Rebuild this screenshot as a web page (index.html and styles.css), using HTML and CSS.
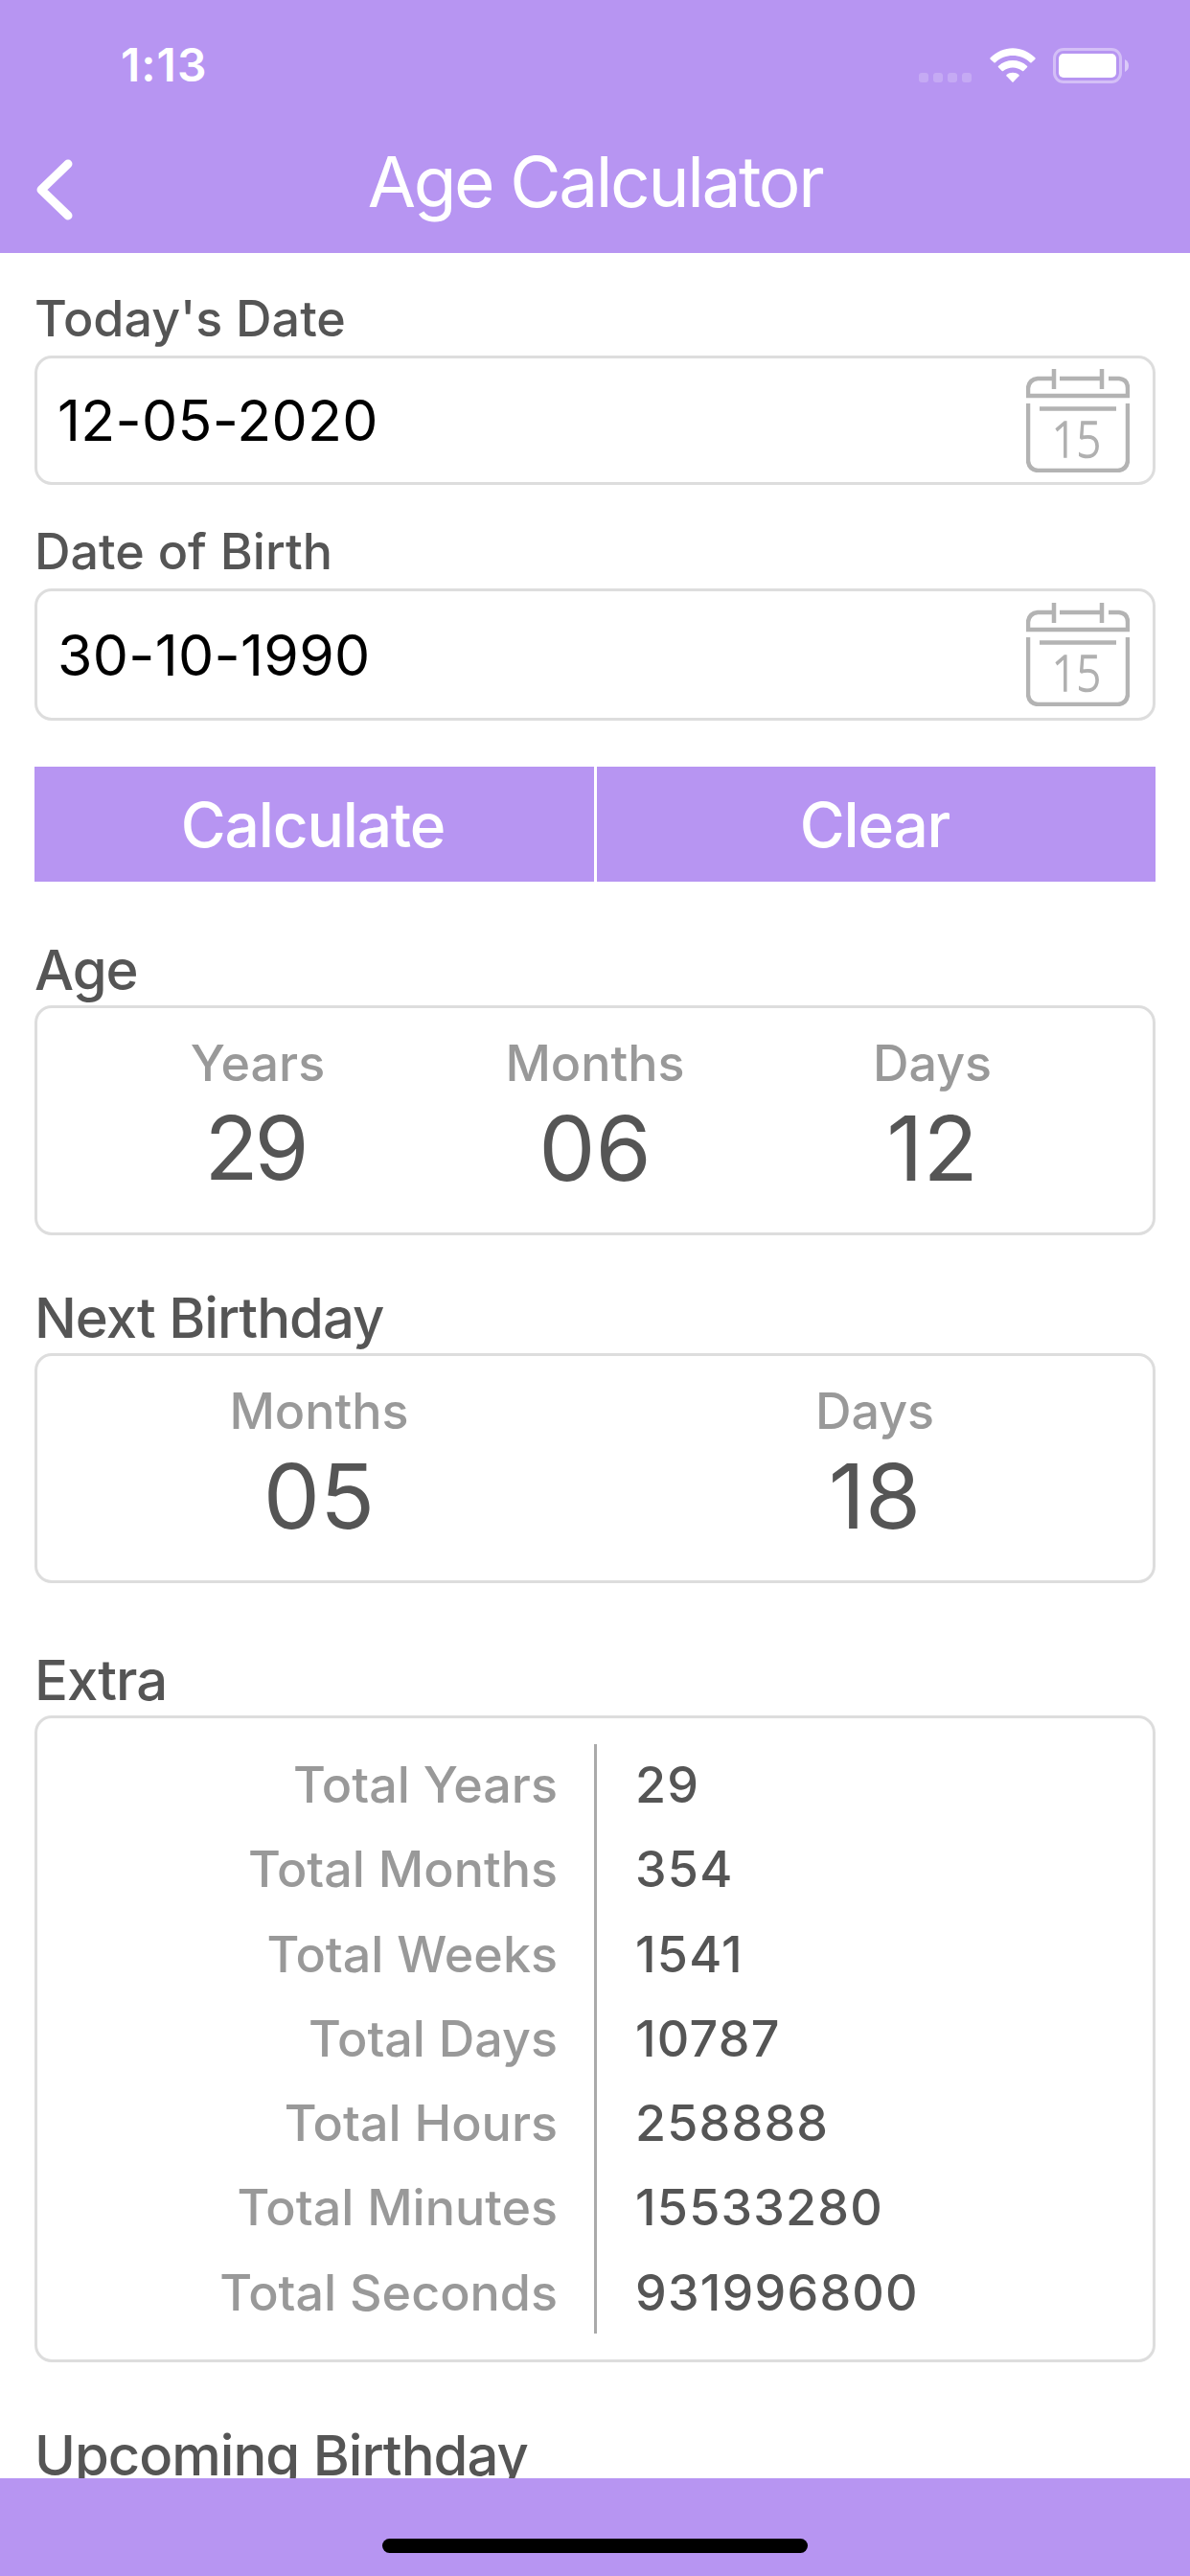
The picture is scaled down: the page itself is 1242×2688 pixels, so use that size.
FILE: index.html
```html
<!DOCTYPE html>
<html lang="en">
<head>
    <meta charset="UTF-8">
    <meta name="viewport" content="width=device-width, initial-scale=1.0">
    <title>Age Calculator</title>
    <link rel="stylesheet" href="styles.css">
</head>
<body>

    <!-- Header -->
    <header class="header">
        <div class="status-bar">
            <span class="time">1:13</span>
            <div class="status-icons">
                <svg class="signal" viewBox="0 0 55 10">
                    <rect x="0" width="10" height="10" rx="3"/>
                    <rect x="15" width="10" height="10" rx="3"/>
                    <rect x="30" width="10" height="10" rx="3"/>
                    <rect x="45" width="10" height="10" rx="3"/>
                </svg>
                <svg class="wifi" viewBox="0 0 48 36">
                    <path d="M0.6 10.2C14 -3.2 34 -3.2 47.4 10.2Q48 11 47.4 11.700L43.600 15.300Q43 15.800 42.200 15.200C32 5.600 16 5.600 5.800 15.200Q5 15.800 4.400 15.300L0.600 11.700Q0 11 0.600 10.200Z"/>
                    <path d="M8.900 18.900C17.500 11 30.500 11 39.100 18.900Q39.600 19.500 39 20.200L35.300 24Q34.600 24.600 34 24C28 19.200 20 19.200 14 24Q13.400 24.600 12.700 24L9 20.200Q8.400 19.500 8.900 18.900Z"/>
                    <path d="M17.500 28C21 25 27 25 30.500 28Q31 28.600 30.500 29.300L24.600 35.500Q24 36 23.400 35.500L17.500 29.300Q17 28.600 17.500 28Z"/>
                </svg>
                <svg class="battery" viewBox="0 0 80 37">
                    <rect class="battery-case" x="1.500" y="1.500" width="69" height="34" rx="9.500"/>
                    <rect x="6" y="6" width="60" height="25" rx="5"/>
                    <path class="battery-tip" d="M75 12Q79 14 79 18.500Q79 23 75 25Z"/>
                </svg>
            </div>
        </div>
        <div class="nav-bar">
            <svg class="back" viewBox="0 0 38 64">
                <path d="M33 5L5 32L33 59"/>
            </svg>
            <h1>Age Calculator</h1>
        </div>
    </header>

    <main class="content">
        <!-- Date inputs -->
        <div class="form-group">
            <h3>Today's Date</h3>
            <div class="date-field">
                <span>12-05-2020</span>
                <svg class="calendar" viewBox="0 0 108 108">
                    <path d="M29 0V21M79 0V21M35 10H78M86 10H97Q106 11 106 20V28H2V20Q3 11 12 10H27"/>
                    <path d="M2 36V96Q3 105 12 106H96Q105 105 106 96V36M14 41.500H94"/>
                    <text x="27" y="92" textLength="51" lengthAdjust="spacingAndGlyphs">15</text>
                </svg>
            </div>
        </div>
        <div class="form-group">
            <h3>Date of Birth</h3>
            <div class="date-field tall">
                <span>30-10-1990</span>
                <svg class="calendar" viewBox="0 0 108 108">
                    <path d="M29 0V21M79 0V21M35 10H78M86 10H97Q106 11 106 20V28H2V20Q3 11 12 10H27"/>
                    <path d="M2 36V96Q3 105 12 106H96Q105 105 106 96V36M14 41.500H94"/>
                    <text x="27" y="92" textLength="51" lengthAdjust="spacingAndGlyphs">15</text>
                </svg>
            </div>
        </div>

        <div class="buttons">
            <button>Calculate</button>
            <button>Clear</button>
        </div>

        <!-- Results -->
        <section class="age">
            <h2>Age</h2>
            <div class="card three">
                <div class="stat"><p>Years</p><strong>29</strong></div>
                <div class="stat"><p>Months</p><strong>06</strong></div>
                <div class="stat"><p>Days</p><strong>12</strong></div>
            </div>
        </section>

        <section class="next">
            <h2>Next Birthday</h2>
            <div class="card two">
                <div class="stat"><p>Months</p><strong>05</strong></div>
                <div class="stat"><p>Days</p><strong>18</strong></div>
            </div>
        </section>

        <section class="extra">
            <h2>Extra</h2>
            <div class="card totals">
                <ul class="names">
                    <li>Total Years</li>
                    <li>Total Months</li>
                    <li>Total Weeks</li>
                    <li>Total Days</li>
                    <li>Total Hours</li>
                    <li>Total Minutes</li>
                    <li>Total Seconds</li>
                </ul>
                <div class="divider"></div>
                <ul class="values">
                    <li>29</li>
                    <li>354</li>
                    <li>1541</li>
                    <li>10787</li>
                    <li>258888</li>
                    <li>15533280</li>
                    <li>931996800</li>
                </ul>
            </div>
        </section>

        <section class="upcoming">
            <h2>Upcoming Birthday</h2>
        </section>
    </main>

    <footer class="footer">
        <div class="home-bar"></div>
    </footer>

</body>
</html>
```

FILE: styles.css
```css
* {
    margin: 0;
    padding: 0;
    box-sizing: border-box;
}

body {
    font-family: Inter, Roboto, sans-serif;
    width: 1242px;
    height: 2688px;
    overflow: hidden;
    display: flex;
    flex-direction: column;
    background: #fff;
    color: #555;
}

/* Header */
.header {
    height: 264px;
    flex: none;
    background: #b795f2;
    color: #fff;
}

.status-bar {
    height: 136px;
    padding: 0 63px 0 126px;
    display: flex;
    justify-content: space-between;
    align-items: center;
}

.time {
    font-size: 48px;
    font-weight: 600;
    line-height: 60px;
    letter-spacing: 1px;
}

.status-icons {
    display: flex;
    align-items: flex-end;
    height: 37px;
    fill: #fff;
}

.signal {
    width: 55px;
    height: 10px;
    margin: 0 19px 1px 0;
    fill: rgba(255, 255, 255, 0.2);
}

.wifi {
    width: 48px;
    height: 36px;
    margin: 0 18px 1px 0;
}

.battery {
    width: 80px;
    height: 37px;
}

.battery-case {
    fill: none;
    stroke: rgba(255, 255, 255, 0.4);
    stroke-width: 3;
}

.battery-tip {
    fill: rgba(255, 255, 255, 0.5);
}

.nav-bar {
    height: 128px;
    padding: 0 38px;
    display: grid;
    grid-template-columns: 38px 1fr 38px;
}

.back {
    width: 38px;
    height: 64px;
    margin-top: 30px;
    fill: none;
    stroke: #fff;
    stroke-width: 9;
    stroke-linecap: round;
    stroke-linejoin: round;
}

h1 {
    font-size: 73px;
    font-weight: 400;
    line-height: 90px;
    margin-top: 9px;
    letter-spacing: -2.4px;
    text-align: center;
}

/* Content */
.content {
    flex: none;
    height: 2322px;
    padding: 39px 36px 0;
    overflow: hidden;
}

h2 {
    font-size: 58px;
    font-weight: 500;
    line-height: 60px;
    margin-bottom: 7px;
    letter-spacing: -1px;
}

h3 {
    font-size: 52px;
    font-weight: 500;
    line-height: 60px;
    margin-bottom: 8px;
}

.form-group {
    margin-bottom: 40px;
}

.date-field {
    height: 135px;
    padding: 0 24px 0 21px;
    display: flex;
    justify-content: space-between;
    align-items: center;
    border: 3px solid #ddd;
    border-radius: 18px;
    font-size: 59px;
    letter-spacing: 0.3px;
    color: #000;
}

.date-field.tall {
    height: 138px;
}

.calendar {
    width: 108px;
    height: 108px;
    fill: none;
    stroke: #b3b3b3;
    stroke-width: 4.5;
}

.calendar text {
    font-family: "Open Sans", "Noto Sans", sans-serif;
    font-size: 52px;
    font-weight: 300;
    letter-spacing: 0;
    fill: #b0b0b0;
    stroke: #b0b0b0;
    stroke-width: 1.5;
}

.buttons {
    display: grid;
    grid-template-columns: 584px 583px;
    gap: 3px;
    margin-top: 48px;
}

button {
    height: 120px;
    padding-right: 3px;
    border: none;
    background: #b795f2;
    color: #fff;
    font-family: inherit;
    font-size: 64px;
    font-weight: 500;
    letter-spacing: -1.2px;
}

.card {
    border: 3px solid #ddd;
    border-radius: 18px;
}

.age {
    margin-top: 62px;
}

.next {
    margin-top: 56px;
}

.extra {
    margin-top: 71px;
}

.upcoming {
    margin-top: 67px;
}

.three,
.two {
    height: 240px;
    padding: 28px 54px 0;
    display: grid;
    grid-template-columns: repeat(3, 1fr);
    text-align: center;
}

.two {
    padding: 28px 0 0 4px;
    grid-template-columns: repeat(2, 1fr);
}

.stat p {
    font-size: 52px;
    font-weight: 500;
    line-height: 60px;
    color: #999;
}

.stat strong {
    display: block;
    margin-top: 8px;
    font-size: 94px;
    font-weight: 400;
    line-height: 100px;
}

.three .stat:first-child strong {
    padding-right: 6px;
    font-size: 92px;
    letter-spacing: -4px;
}

/* Totals table */
.totals {
    height: 675px;
    padding-top: 26px;
    display: grid;
    grid-template-columns: 581px 3px 1fr;
    font-size: 52px;
    font-weight: 500;
}

.totals ul {
    list-style: none;
}

.totals li {
    height: 88.3px;
    line-height: 88.3px;
}

.names {
    padding-right: 38px;
    text-align: right;
    color: #999;
}

.values {
    padding-left: 40px;
    letter-spacing: 1.2px;
}

.divider {
    height: 615px;
    margin-top: 1px;
    background: #aaa;
}

/* Footer */
.footer {
    flex: 1;
    padding-top: 63px;
    background: #b795f2;
}

.home-bar {
    width: 444px;
    height: 15px;
    margin: 0 auto;
    border-radius: 8px;
    background: #000;
}
```
